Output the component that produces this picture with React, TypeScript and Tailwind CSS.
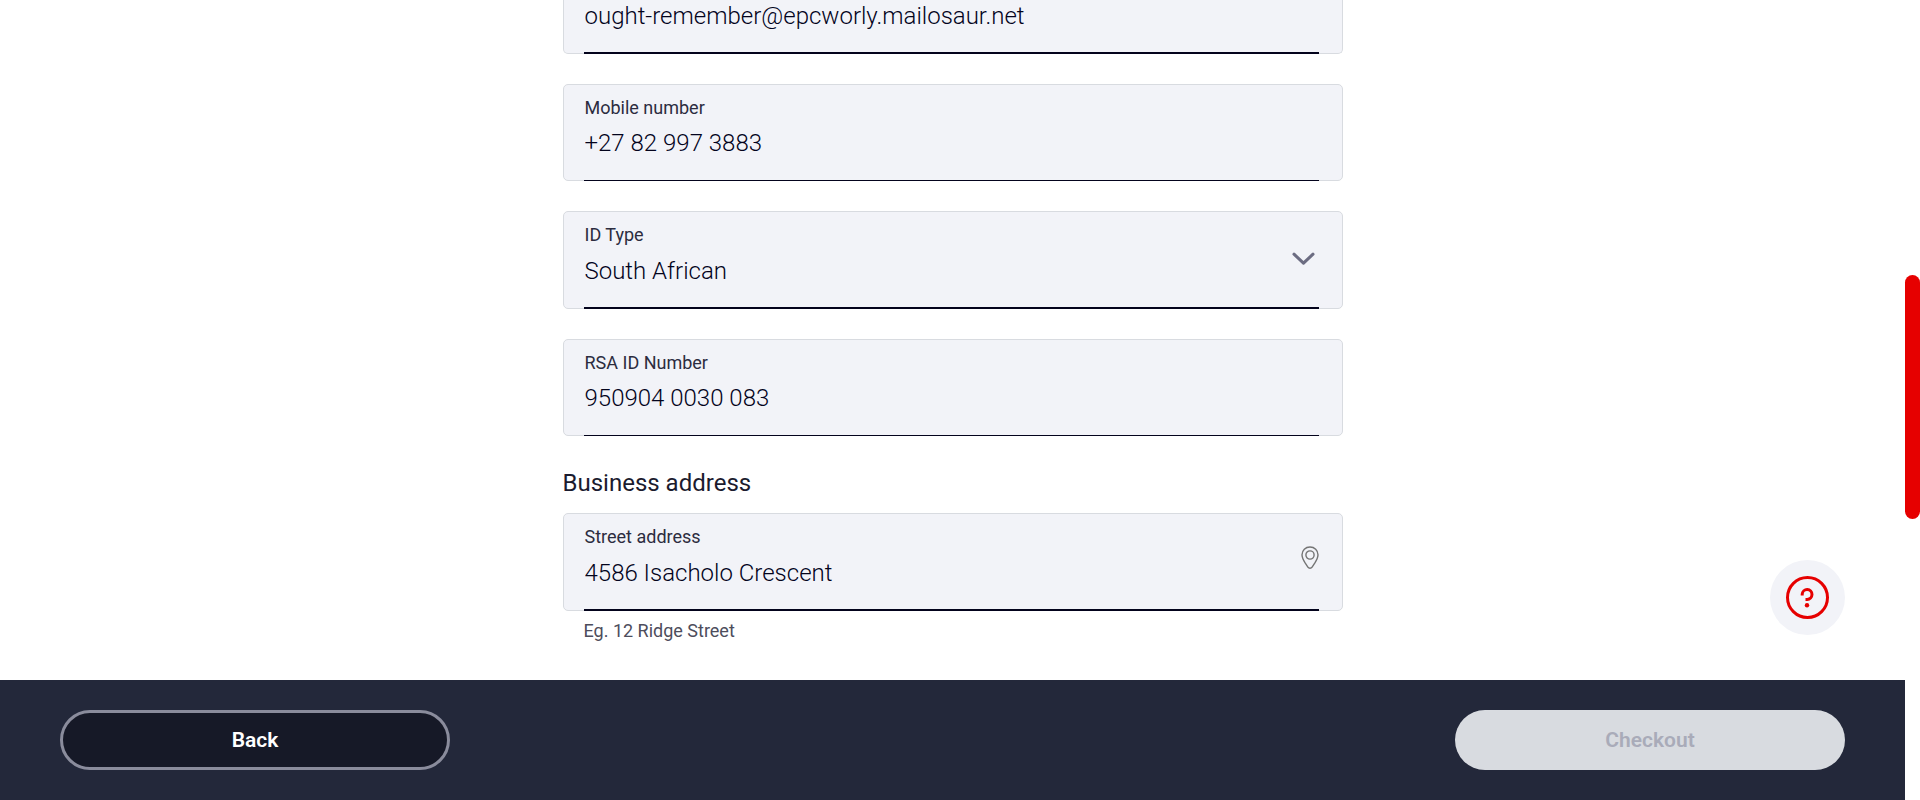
import { useState } from "react";
import type { ReactNode } from "react";

const VALUE = "block w-full appearance-none bg-transparent text-2xl leading-8 font-light text-[#03031c] outline-none";

type FieldProps = {
  id: string;
  label: string;
  thick?: boolean;
  icon?: ReactNode;
  children: ReactNode;
};

function Field({ id, label, thick = false, icon, children }: FieldProps) {
  return (
    <div className="rounded-[5px] border border-[#d8dbe0] bg-[#f2f3f8] pr-[23px] pl-5">
      <div
        className={
          thick
            ? "relative -mb-px flex flex-col gap-2 border-b-2 border-[#03031c] px-px pt-[11px] pb-5"
            : "relative -mb-px flex flex-col gap-[7px] border-b border-[#03031c] px-px pt-[11px] pb-[21px]"
        }
      >
        <label htmlFor={id} className="block w-fit text-lg leading-6 font-normal text-[#2c2c3f]">
          {label}
        </label>
        {children}
        {icon}
      </div>
    </div>
  );
}

function ChevronIcon() {
  return (
    <svg
      aria-hidden="true"
      className="pointer-events-none absolute top-[38px] right-[3px] h-4 w-6"
      viewBox="0 0 24 16"
      fill="none"
      stroke="#6c6c82"
      strokeWidth="3.1"
      strokeLinecap="round"
      strokeLinejoin="round"
    >
      <path d="M2 4.2 11.500 13.200 21 4.200" />
    </svg>
  );
}

function PinIcon() {
  return (
    <svg
      aria-hidden="true"
      className="pointer-events-none absolute top-8 right-0 h-6 w-[18px]"
      viewBox="0 0 18 24"
      fill="none"
      stroke="#747474"
      strokeWidth="1.4"
      strokeLinejoin="round"
    >
      <path d="M9 1C4.500 1 1 4.400 1 8.800c0 2.800 1.300 5.200 3.100 8.100l2.800 4.200c1 1.500 3.200 1.500 4.200 0l2.800-4.200c1.800-2.900 3.100-5.300 3.100-8.100C17 4.400 13.500 1 9 1Z" />
      <circle cx="9" cy="9" r="4.100" />
    </svg>
  );
}

function HelpIcon() {
  return (
    <svg aria-hidden="true" className="size-[43px]" viewBox="0 0 43 43" fill="none" stroke="#e60000" strokeWidth="3">
      <circle cx="21.500" cy="21.500" r="20" />
      <path d="M16.200 19.500v-1.400a4.900 4.900 0 1 1 5 5.300h-1.700" strokeLinejoin="round" />
      <circle cx="21" cy="29.200" r="2.200" fill="#e60000" stroke="none" />
    </svg>
  );
}

export default function App() {
  const [email, setEmail] = useState("ought-remember@epcworly.mailosaur.net");
  const [mobile, setMobile] = useState("+27 82 997 3883");
  const [idType, setIdType] = useState("South African");
  const [idNumber, setIdNumber] = useState("950904 0030 083");
  const [street, setStreet] = useState("4586 Isacholo Crescent");

  return (
    <div className="flex h-screen bg-white font-['Roboto',sans-serif]">
      <div className="relative flex min-w-0 flex-1 flex-col">
        <main className="min-h-0 flex-1 overflow-hidden px-6">
          <form className="mx-auto flex max-w-[780px] flex-col gap-[30px]">
            <div className="rounded-b-[5px] border border-t-0 border-[#d8dbe0] bg-[#f2f3f8] pr-[23px] pl-5">
              <div className="-mb-px border-b-2 border-[#03031c] px-px pb-5">
                <input
                  type="email"
                  aria-label="Email address"
                  value={email}
                  onChange={(e) => setEmail(e.target.value)}
                  className={VALUE}
                />
              </div>
            </div>
            <Field id="mobile" label="Mobile number">
              <input id="mobile" type="tel" value={mobile} onChange={(e) => setMobile(e.target.value)} className={VALUE} />
            </Field>
            <Field id="id-type" label="ID Type" thick icon={<ChevronIcon />}>
              <select id="id-type" value={idType} onChange={(e) => setIdType(e.target.value)} className={VALUE}>
                <option>South African</option>
              </select>
            </Field>
            <Field id="id-number" label="RSA ID Number">
              <input id="id-number" value={idNumber} onChange={(e) => setIdNumber(e.target.value)} className={VALUE} />
            </Field>
            <section>
              <h2 className="pb-[13px] text-2xl leading-[34px] font-normal text-[#1b1b2e]">Business address</h2>
              <Field id="street" label="Street address" thick icon={<PinIcon />}>
                <input id="street" value={street} onChange={(e) => setStreet(e.target.value)} className={VALUE} />
              </Field>
              <p className="px-[21px] pt-2 text-lg leading-6 font-normal text-[#4d4d5c]">Eg. 12 Ridge Street</p>
            </section>
          </form>
        </main>

        <button
          type="button"
          aria-label="Help"
          className="absolute right-[60px] bottom-[165px] flex size-[75px] items-center justify-center rounded-full bg-[#f2f3f8]"
        >
          <HelpIcon />
        </button>

        <footer className="flex items-center justify-between bg-[#23283a] px-[60px] py-[30px]">
          <button
            type="button"
            className="h-[60px] w-[390px] rounded-full border-3 border-[#8a8c9c] bg-[#161927] text-[21px] leading-6 font-semibold text-white"
          >
            Back
          </button>
          <button
            type="button"
            disabled
            className="h-[60px] w-[390px] rounded-full bg-[#d8dbe0] text-[21px] leading-6 font-semibold text-[#a9abb9]"
          >
            Checkout
          </button>
        </footer>
      </div>

      <div className="w-[15px] shrink-0 bg-white pt-[275px]">
        <div className="h-[244px] rounded-full bg-[#e60000]" />
      </div>
    </div>
  );
}
